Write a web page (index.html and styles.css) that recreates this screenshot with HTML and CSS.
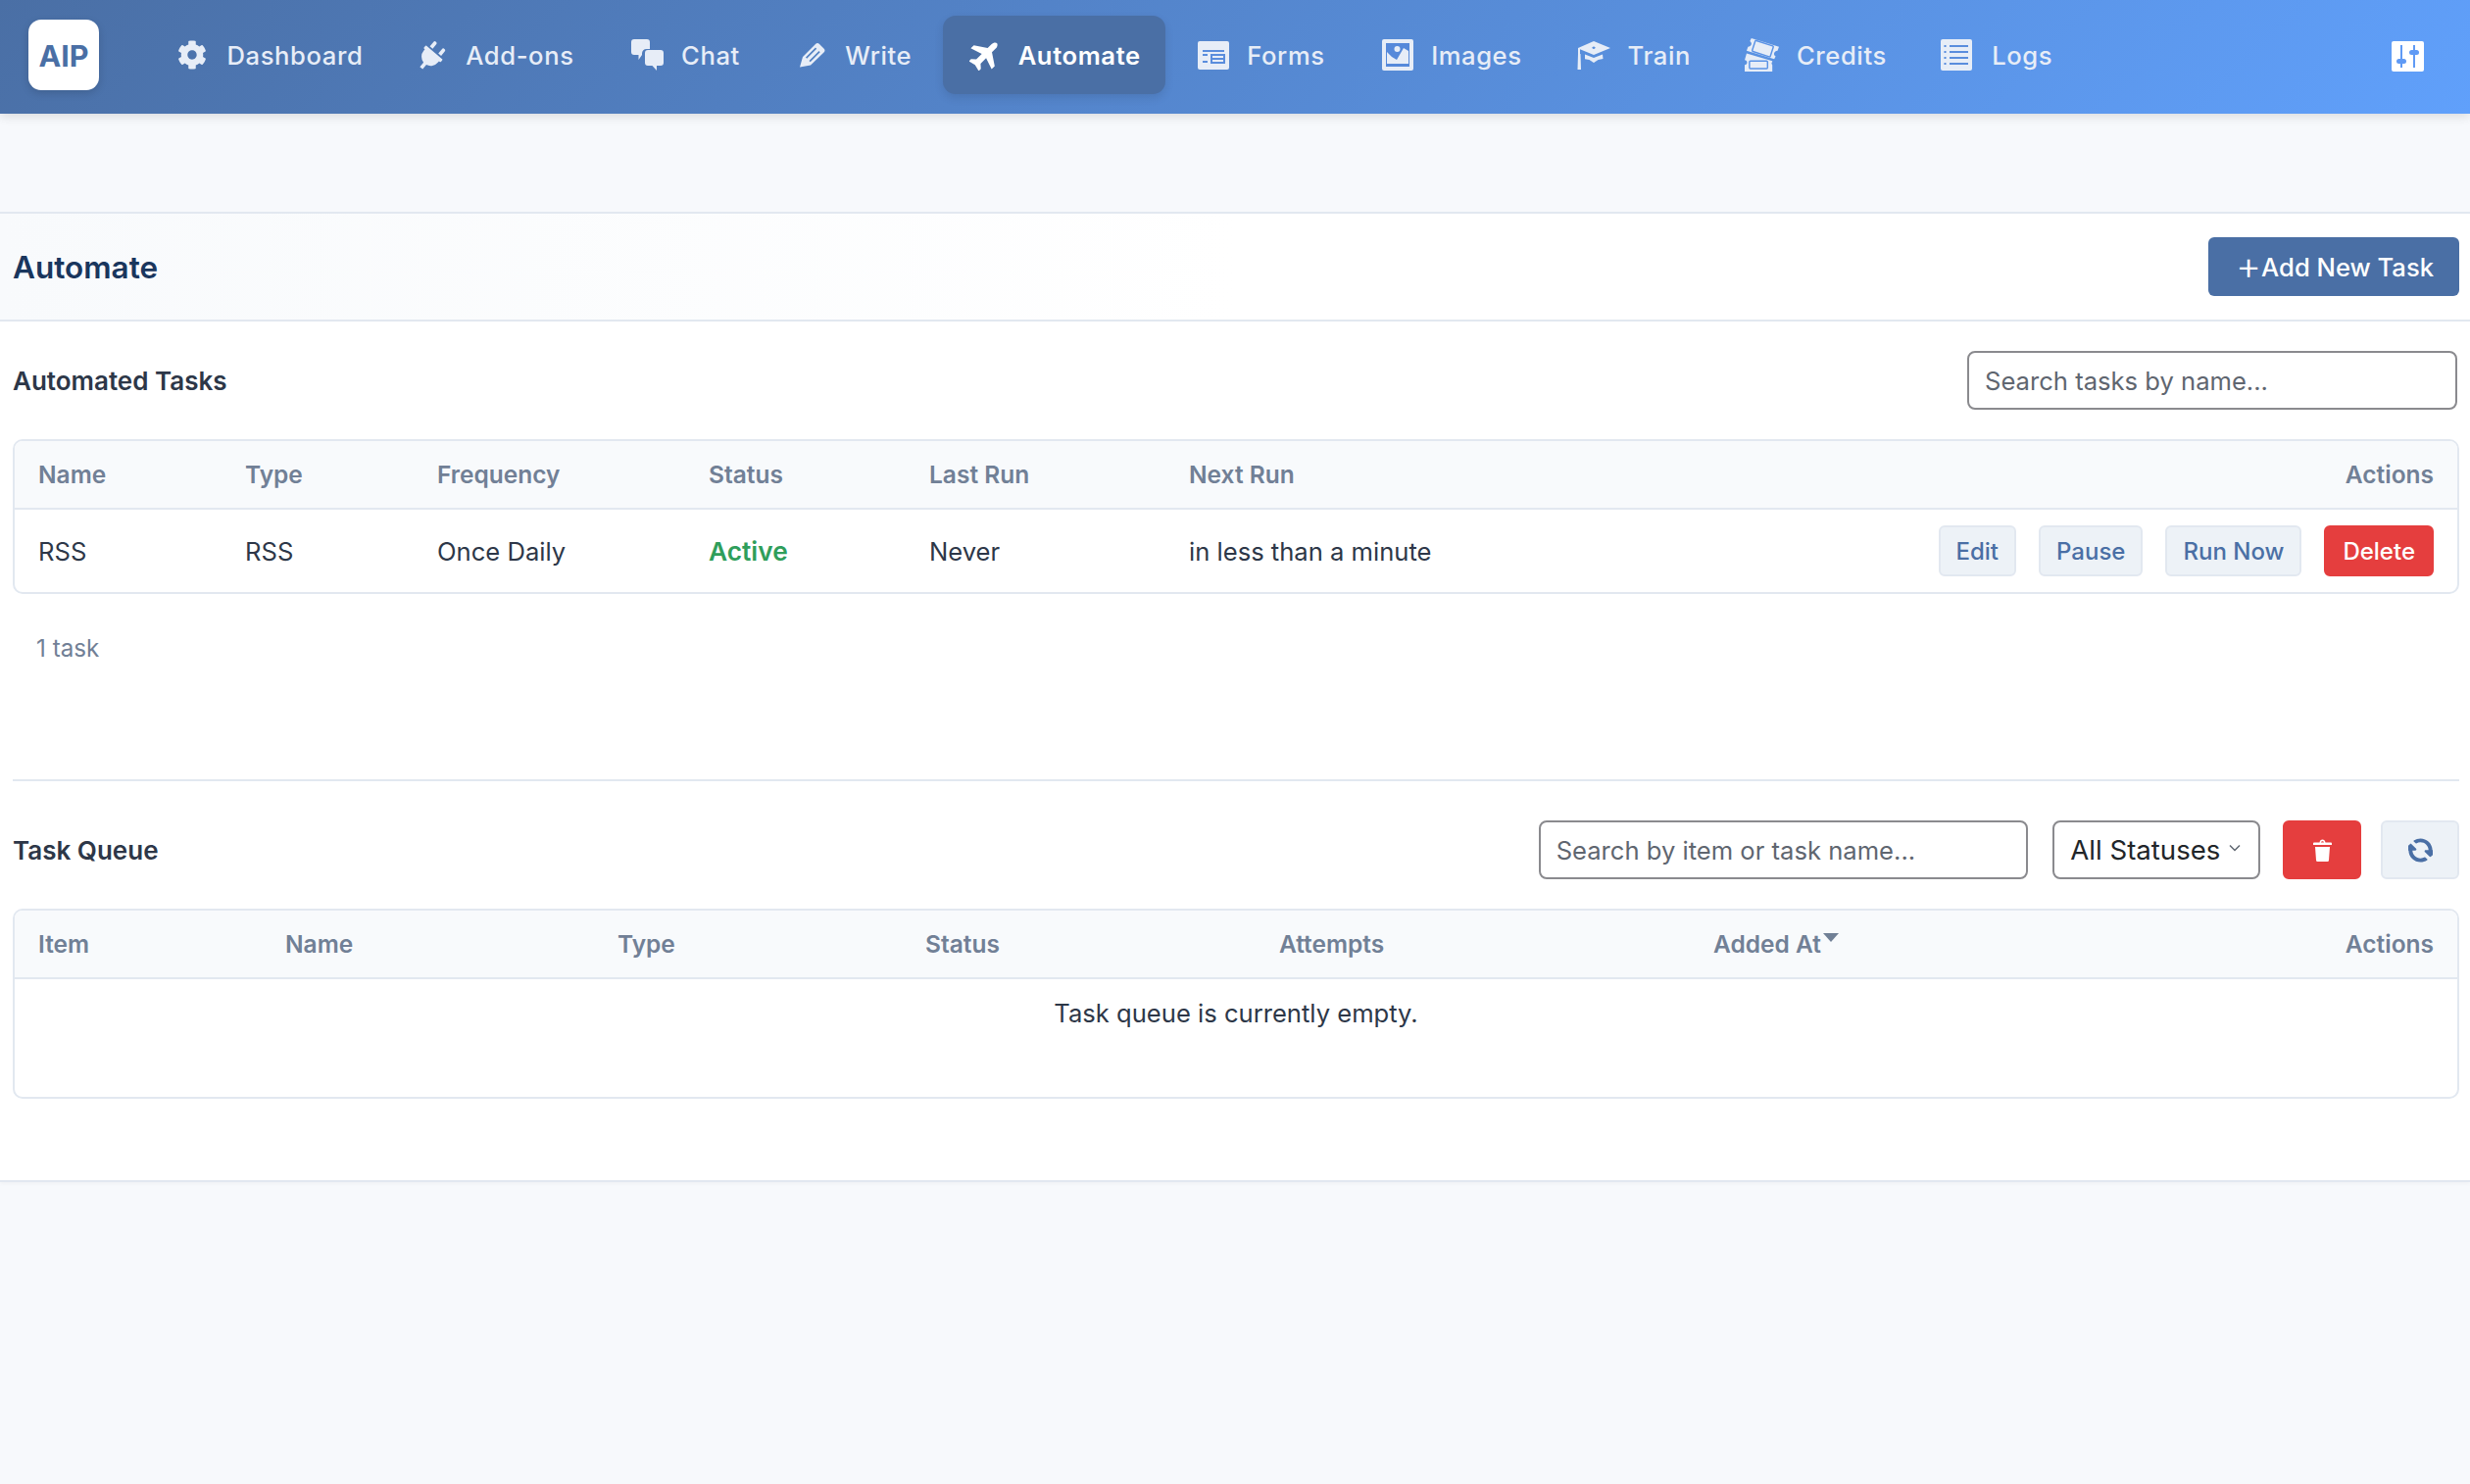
FILE: index.html
```html
<!DOCTYPE html>
<html lang="en">
<head>
  <meta charset="UTF-8" />
  <title>Automate</title>
  <link rel="stylesheet" href="styles.css">
</head>
<body>
  <header class="topbar">
    <div class="logo">AIP</div>
    <nav class="nav">
      <a class="nav-item">
        <svg class="nav-icon" width="30" height="30" viewBox="0 0 512 512"><path d="M487.4 315.7l-42.6-24.6c4.3-23.2 4.3-47 0-70.2l42.6-24.6c4.9-2.8 7.1-8.6 5.5-14-11.1-35.6-30-67.8-54.7-94.6-3.8-4.1-10-5.1-14.8-2.3L380.8 110c-17.9-15.4-38.5-27.3-60.8-35.1V25.8c0-5.6-3.9-10.5-9.4-11.7-36.7-8.2-74.3-7.8-109.2 0-5.5 1.2-9.4 6.1-9.4 11.7V75c-22.2 7.9-42.8 19.8-60.8 35.1L88.7 85.5c-4.9-2.8-11-1.9-14.8 2.3-24.7 26.7-43.6 58.9-54.7 94.6-1.7 5.4.6 11.2 5.5 14L67.3 221c-4.3 23.2-4.3 47 0 70.2l-42.6 24.6c-4.9 2.8-7.1 8.6-5.5 14 11.1 35.6 30 67.8 54.7 94.6 3.8 4.1 10 5.1 14.8 2.3l42.6-24.6c17.9 15.4 38.5 27.3 60.8 35.1v49.2c0 5.6 3.9 10.5 9.4 11.7 36.7 8.2 74.3 7.8 109.2 0 5.5-1.2 9.4-6.1 9.4-11.7v-49.2c22.2-7.9 42.8-19.8 60.8-35.1l42.6 24.6c4.9 2.8 11 1.9 14.8-2.3 24.7-26.7 43.6-58.9 54.7-94.6 1.5-5.5-.7-11.3-5.6-14.1zM256 336c-44.1 0-80-35.9-80-80s35.9-80 80-80 80 35.9 80 80-35.9 80-80 80z"/></svg>
        <span>Dashboard</span>
      </a>
      <a class="nav-item">
        <svg class="nav-icon" width="28" height="30" viewBox="0 -30 470 510"><path transform="rotate(40 192 256)" d="M320 32a32 32 0 0 0-64 0v96h64zm48 128H16a16 16 0 0 0-16 16v32a16 16 0 0 0 16 16h16v32a160.070 160.070 0 0 0 128 156.800V512h64v-99.200A160.070 160.070 0 0 0 352 256v-32h16a16 16 0 0 0 16-16v-32a16 16 0 0 0-16-16zM128 32a32 32 0 0 0-64 0v96h64z"/></svg>
        <span>Add-ons</span>
      </a>
      <a class="nav-item">
        <svg class="nav-icon" width="33" height="32" viewBox="0 0 33 32"><path d="M3 0h13a3 3 0 0 1 3 3v7h-3.500a4.500 4.500 0 0 0-4.500 4.500V16l-3.500 5v-5H3a3 3 0 0 1-3-3V3a3 3 0 0 1 3-3z"/><path d="M17 11h13a3 3 0 0 1 3 3v10a3 3 0 0 1-3 3h-4v5l-4.500-5H17a3 3 0 0 1-3-3V14a3 3 0 0 1 3-3z"/></svg>
        <span>Chat</span>
      </a>
      <a class="nav-item">
        <svg class="nav-icon" width="26" height="26" viewBox="0 0 26 26"><path fill-rule="evenodd" d="M0 25.500L3 15 16 2a2.800 2.800 0 0 1 4 0l4.500 4.500a2.800 2.800 0 0 1 0 4L11 23.500zM6 15.500l10-10 1.200 1.200-10 10zM9.500 19l10-10 1.200 1.200-10 10z"/></svg>
        <span>Write</span>
      </a>
      <a class="nav-item active">
        <svg class="nav-icon" width="31" height="31" viewBox="-17.500 -17.500 35 35"><path transform="rotate(-45)" d="M20 0c0-2-3-3.500-5-3.500H8.500L-.5-17h-5L-1-3.500h-9L-14-8h-3.500l2 8-2 8H-14l4-4.500h9L-5.500 17h5L8.500 3.500H15c2 0 5-1.500 5-3.500z"/></svg>
        <span>Automate</span>
      </a>
      <a class="nav-item">
        <svg class="nav-icon" width="32" height="29" viewBox="0 0 32 29"><rect width="32" height="29" rx="2"/><path class="cut" d="M5 10h22M5 14h5M5 21h5M14 14h13v8H14zM14 18h13" fill="none"/></svg>
        <span>Forms</span>
      </a>
      <a class="nav-item">
        <svg class="nav-icon" width="32" height="32" viewBox="0 0 32 32"><rect width="32" height="32" rx="2"/><rect class="hole" x="4" y="4" width="24" height="24"/><circle cx="15.500" cy="10" r="3"/><path d="M5 25V13l5 5 5 3 7-12 5 3v13z"/></svg>
        <span>Images</span>
      </a>
      <a class="nav-item">
        <svg class="nav-icon" width="34" height="29" viewBox="0 0 34 29"><path fill-rule="evenodd" d="M17 0l17 7-17 7L3 8.300V13H1V7zM17 5.500a1.600 1.200 0 1 0 .01 0z"/><path d="M1 13h2.500l.5 16H.5zM8 13.500l9 3.500 9-3.500.5 4.500-5 1-4.500 3-4.500-3-4.500-.8z"/></svg>
        <span>Train</span>
      </a>
      <a class="nav-item">
        <svg class="nav-icon" width="35" height="34" viewBox="0 0 36 35"><path d="M7 0l29 9-1.500 4c-2 0-3 1-3.500 2.500s0 2.500 1.500 3.500L31 22 2 13l1.500-4C5 9 6.500 8 7 6.500S6.500 4 5.500 3z"/><rect class="hole-line" x="9" y="5" width="20" height="12" rx="1" transform="rotate(18 19 11)" fill="none"/><path d="M2 16l27 8v1c-1 .5-1 2 0 3v7H0v-7c1.500 0 2.500-1 2.500-2.500S1.500 23 0 23z"/><rect class="hole-line" x="5" y="24" width="19" height="8" rx="1" fill="none"/></svg>
        <span>Credits</span>
      </a>
      <a class="nav-item">
        <svg class="nav-icon" width="32" height="32" viewBox="0 0 32 32"><rect width="32" height="32" rx="2"/><path class="cut" d="M9 7h19M9 13h19M9 19h19M9 25h19" fill="none"/><path class="cut" d="M3.500 7h2M3.500 13h2M3.500 19h2M3.500 25h2" fill="none"/></svg>
        <span>Logs</span>
      </a>
    </nav>
    <svg class="settings-icon" width="33" height="31" viewBox="0 0 33 31"><rect width="33" height="31" rx="2" fill="#fff"/><path d="M10 4v23M23 4v23" stroke="#5f9af5" stroke-width="2"/><rect x="5" y="18" width="10" height="5" rx="2.500" fill="#5f9af5"/><rect x="18" y="9" width="10" height="5" rx="2.500" fill="#5f9af5"/></svg>
  </header>

  <main class="panel">
    <div class="page-head">
      <h1>Automate</h1>
      <button class="btn btn-primary"><span class="plus">+</span>Add New Task</button>
    </div>

    <section class="section">
      <div class="section-head">
        <h2>Automated Tasks</h2>
        <input class="field field-tasks" type="text" placeholder="Search tasks by name...">
      </div>
      <div class="table-card">
        <table class="tasks">
          <thead>
            <tr>
              <th class="c-name">Name</th>
              <th class="c-type">Type</th>
              <th class="c-freq">Frequency</th>
              <th class="c-status">Status</th>
              <th class="c-last">Last Run</th>
              <th>Next Run</th>
              <th class="right">Actions</th>
            </tr>
          </thead>
          <tbody>
            <tr>
              <td>RSS</td>
              <td>RSS</td>
              <td>Once Daily</td>
              <td class="active-status">Active</td>
              <td>Never</td>
              <td>in less than a minute</td>
              <td>
                <div class="row-actions">
                  <button class="btn btn-soft">Edit</button>
                  <button class="btn btn-soft">Pause</button>
                  <button class="btn btn-soft">Run Now</button>
                  <button class="btn btn-danger">Delete</button>
                </div>
              </td>
            </tr>
          </tbody>
        </table>
      </div>
      <p class="count">1 task</p>
    </section>

    <section class="section queue">
      <div class="section-head">
        <h2>Task Queue</h2>
        <div class="queue-tools">
          <input class="field field-queue" type="text" placeholder="Search by item or task name...">
          <div class="select-wrap">
            <select class="field field-select">
              <option>All Statuses</option>
            </select>
            <svg class="chevron" width="12" height="8" viewBox="0 0 12 8"><path d="M1 1.500l5 5 5-5" fill="none" stroke="#5f6670" stroke-width="1.500"/></svg>
          </div>
          <button class="btn btn-danger btn-icon">
            <svg width="19" height="23" viewBox="0 0 19 23"><path d="M1 3.500h5.500C6.800 1.500 8 .5 9.500.5s2.700 1 3 3H18a1 1 0 0 1 1 1V6H0V4.500a1 1 0 0 1 1-1zM8 3.500h3c-.2-.8-.8-1.300-1.500-1.300S8.200 2.700 8 3.500zM2 8h15l-1 13.500a1.500 1.500 0 0 1-1.500 1.500h-10A1.500 1.500 0 0 1 3 21.500z" fill="#fff" fill-rule="evenodd"/></svg>
          </button>
          <button class="btn btn-soft btn-icon">
            <svg width="25" height="25" viewBox="0 0 512 512"><path transform="rotate(45 256 256)" fill="#4a6fa5" d="M370.720 133.280C339.458 104.008 298.888 87.962 255.848 88c-77.458.068-144.328 53.178-162.791 126.850-1.344 5.363-6.122 9.150-11.651 9.150H24.103c-7.498 0-13.194-6.807-11.807-14.176C33.933 94.924 134.813 8 256 8c66.448 0 126.791 26.136 171.315 68.685L463.030 40.970C478.149 25.851 504 36.559 504 57.941V192c0 13.255-10.745 24-24 24H345.941c-21.382 0-32.090-25.851-16.971-40.971l41.750-41.749zM32 296h134.059c21.382 0 32.090 25.851 16.971 40.971l-41.750 41.750c31.262 29.273 71.835 45.319 114.876 45.280 77.418-.07 144.315-53.144 162.787-126.849 1.344-5.363 6.122-9.150 11.651-9.150h57.304c7.498 0 13.194 6.807 11.807 14.176C478.067 417.076 377.187 504 256 504c-66.448 0-126.791-26.136-171.315-68.685L48.970 471.030C33.851 486.149 8 475.441 8 454.059V320c0-13.255 10.745-24 24-24z"/></svg>
          </button>
        </div>
      </div>
      <div class="table-card">
        <table class="queue-table">
          <thead>
            <tr>
              <th class="q-item">Item</th>
              <th class="q-name">Name</th>
              <th class="q-type">Type</th>
              <th class="q-status">Status</th>
              <th class="q-attempts">Attempts</th>
              <th class="q-added">Added At<span class="caret"></span></th>
              <th class="right">Actions</th>
            </tr>
          </thead>
          <tbody>
            <tr>
              <td class="empty" colspan="7">Task queue is currently empty.</td>
            </tr>
          </tbody>
        </table>
      </div>
    </section>
  </main>
</body>
</html>
```

FILE: styles.css
```css
* {
  box-sizing: border-box;
}

body {
  margin: 0;
  min-height: 100vh;
  background: #f7f9fc;
  color: #2d3748;
  font-family: Inter, "Liberation Sans", sans-serif;
  font-size: 25.6px;
}

/* top bar */
.topbar {
  display: flex;
  align-items: center;
  height: 116px;
  padding: 0 47px 4px 29px;
  background: linear-gradient(135deg, #4a6fa5 0%, #60a0fb 100%);
  box-shadow: 0 3px 10px rgba(0, 0, 0, 0.12);
}

.logo {
  display: flex;
  align-items: center;
  justify-content: center;
  width: 72px;
  height: 72px;
  border-radius: 13px;
  background: #fff;
  box-shadow: 0 3px 8px rgba(0, 0, 0, 0.15);
  color: #4a6fa5;
  font-size: 30.5px;
  font-weight: 700;
}

.nav {
  display: flex;
  align-items: center;
  gap: 8.5px;
  margin-left: 55px;
  flex: 1;
}

.nav-item {
  display: flex;
  align-items: center;
  gap: 18px;
  height: 80px;
  padding: 0 25px;
  border-radius: 13px;
  color: #e7edf7;
  font-weight: 500;
  letter-spacing: 0.6px;
}

.nav-item:nth-child(1) { margin-right: -1px; }
.nav-item:nth-child(3) { margin-right: 2.4px; }
.nav-item:nth-child(4) { margin-right: -1.6px; }
.nav-item:nth-child(7) { margin-right: -2.6px; }
.nav-item:nth-child(8) { margin-right: -3.6px; }
.nav-item:nth-child(9) { margin-right: -3.2px; }

.nav-item:nth-child(1) .nav-icon,
.nav-item:nth-child(4) .nav-icon {
  margin-right: 2.5px;
}

.nav-item:nth-child(2) .nav-icon {
  margin-right: 1.4px;
}

.nav-item:nth-child(10) .nav-icon {
  margin-right: 2px;
}

.nav-item.active {
  padding-left: 27px;
  background: #4a6fa5;
  box-shadow: 0 4px 10px rgba(0, 0, 0, 0.1);
  color: #fff;
  font-weight: 600;
}

.nav-item.active .nav-icon {
  margin-right: 0.5px;
}

.nav-icon {
  flex: none;
  fill: currentColor;
}

.nav-icon .cut {
  stroke: #5a8ddd;
  stroke-width: 2;
}

.nav-icon .hole {
  fill: #5689da;
}

.nav-icon .hole-line {
  stroke: #5b93e6;
  stroke-width: 1.5;
}

.settings-icon {
  flex: none;
  margin-top: 3px;
}

/* page panel */
.panel {
  margin-top: 100px;
  background: #fff;
  border-top: 2px solid #e2e8f0;
  border-bottom: 2px solid #e2e8f0;
  box-shadow: 0 2px 4px rgba(0, 0, 0, 0.03);
  height: 990px;
}

.page-head {
  display: flex;
  align-items: center;
  justify-content: space-between;
  height: 110px;
  padding: 0 11px 0 13px;
  background: linear-gradient(90deg, #f8fafc 0%, #fff 50%);
  border-bottom: 2px solid #e2e8f0;
}

h1 {
  margin: 0;
  color: #1a365d;
  font-size: 31.5px;
  font-weight: 600;
}

h2 {
  margin: 0;
  color: #2d3748;
  font-size: 26px;
  font-weight: 600;
}

.btn {
  height: 52px;
  padding: 0 16px;
  border: 2px solid transparent;
  border-radius: 6px;
  font-family: inherit;
  font-size: 24px;
  font-weight: 500;
}

.btn-primary {
  display: flex;
  align-items: center;
  height: 60px;
  padding: 0 26px 0 28px;
  border: none;
  border-radius: 6px;
  background: #4a6fa5;
  color: #fff;
  font-size: 25.6px;
}

.plus {
  font-size: 40px;
  font-weight: 300;
  line-height: 1;
  margin-top: -3px;
}

.btn-soft {
  background: #edf2f7;
  border-color: #e2e8f0;
  color: #4a6fa5;
}

.btn-danger {
  padding: 0 17px;
  background: #e53e3e;
  border-color: #e53e3e;
  color: #fff;
}

.btn-icon {
  display: flex;
  align-items: center;
  justify-content: center;
  width: 80px;
  height: 60px;
  padding: 0;
}

/* sections */
.section {
  padding: 30px 11px 0 13px;
}

.section-head {
  display: flex;
  align-items: center;
  justify-content: space-between;
  margin-bottom: 30px;
}

.field {
  height: 60px;
  padding: 0 16px;
  border: 2px solid #8a8a8e;
  border-radius: 8px;
  background: #fff;
  color: #212529;
  font-family: inherit;
  font-size: 25.6px;
}

.field::placeholder {
  color: #5f6670;
}

.field-tasks {
  width: 500px;
  margin-right: 2px;
}

.field-queue {
  width: 499px;
  margin-right: 5.7px;
}

.field-select {
  width: 212px;
  padding-left: 16px;
  appearance: none;
  font-size: 27.6px;
}

.select-wrap {
  position: relative;
  margin-right: 2.7px;
}

.chevron {
  position: absolute;
  right: 20px;
  top: 24px;
}

.queue-tools {
  display: flex;
  gap: 20px;
}

.table-card {
  border: 2px solid #e2e8f0;
  border-radius: 10px;
  overflow: hidden;
}

table {
  width: 100%;
  border-collapse: collapse;
  table-layout: fixed;
}

th {
  height: 69px;
  padding: 0 0 0 24px;
  background: #f8fafc;
  border-bottom: 2px solid #e2e8f0;
  color: #718096;
  font-size: 24.5px;
  font-weight: 600;
  text-align: left;
}

td {
  height: 85px;
  padding: 0 0 0 24px;
}

th.right {
  padding: 0 24px 0 0;
  text-align: right;
}

.c-name { width: 211px; }
.c-type { width: 196px; }
.c-freq { width: 277px; }
.c-status { width: 225px; }
.c-last { width: 265px; }
.tasks th:nth-child(6) { width: 420px; }

.q-item { width: 252px; }
.q-name { width: 339px; }
.q-type { width: 314px; }
.q-status { width: 361px; }
.q-attempts { width: 443px; }
.q-added { width: 400px; }

.active-status {
  color: #2f9e5b;
  font-size: 26.3px;
  font-weight: 600;
}

.row-actions {
  display: flex;
  justify-content: flex-end;
  gap: 23px;
  padding-right: 24px;
}

.count {
  margin: 0;
  padding: 41px 0 0 24px;
  height: 191px;
  color: #718096;
  font-size: 24.2px;
  line-height: 30px;
  border-bottom: 2px solid #e2e8f0;
}

.section.queue {
  padding-top: 40px;
}

td.empty {
  height: 121px;
  padding: 19px 0 0;
  text-align: center;
  vertical-align: top;
}

.caret {
  display: inline-block;
  margin-left: 2px;
  border-left: 8px solid transparent;
  border-right: 8px solid transparent;
  border-top: 9px solid #718096;
  vertical-align: 11px;
}
```
